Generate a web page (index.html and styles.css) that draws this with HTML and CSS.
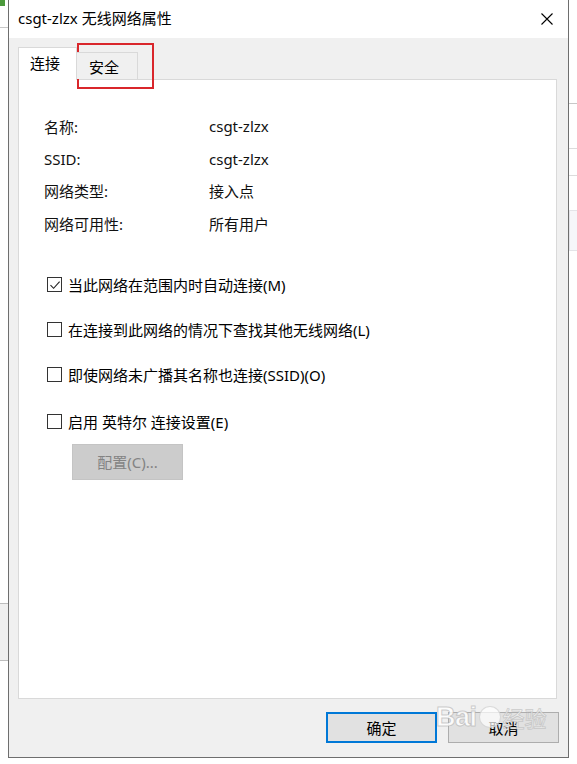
FILE: index.html
```html
<!DOCTYPE html>
<html lang="zh-CN">
<head>
<meta charset="utf-8">
<title>csgt-zlzx 无线网络属性</title>
<link rel="stylesheet" href="styles.css">
</head>
<body>
<div class="backdrop">
  <span class="bg-icon"></span>
  <span class="bg-line bg-line-l1"></span>
  <span class="bg-box bg-box-l"></span>
  <span class="bg-line bg-line-r1"></span>
  <span class="bg-line bg-line-r2"></span>
  <span class="bg-line bg-line-r3"></span>
  <span class="bg-box bg-box-r"></span>
</div>
<div class="dialog">
  <div class="titlebar">
    <span class="title">csgt-zlzx 无线网络属性</span>
    <svg class="close" width="12" height="12" viewBox="0 0 12 12"><path d="M0.5 0.5 L11.5 11.5 M11.5 0.5 L0.5 11.5" stroke="#000" stroke-width="1.1" fill="none"/></svg>
  </div>
  <div class="body">
    <div class="tabs">
      <div class="tab tab-active">连接</div>
      <div class="tab">安全</div>
    </div>
    <div class="panel">
      <div class="info">
        <div class="info-row"><span class="label">名称:</span><span class="value">csgt-zlzx</span></div>
        <div class="info-row"><span class="label">SSID:</span><span class="value">csgt-zlzx</span></div>
        <div class="info-row"><span class="label">网络类型:</span><span class="value">接入点</span></div>
        <div class="info-row"><span class="label">网络可用性:</span><span class="value">所有用户</span></div>
      </div>
      <div class="checks">
        <label class="check check-1"><span class="box"><svg width="12" height="12" viewBox="0 0 12 12"><path d="M1.5 6.2 L4.6 9.3 L10.6 2.6" stroke="#222" stroke-width="1.1" fill="none"/></svg></span>当此网络在范围内时自动连接(M)</label>
        <label class="check check-2"><span class="box"></span>在连接到此网络的情况下查找其他无线网络(L)</label>
        <label class="check check-3"><span class="box"></span>即使网络未广播其名称也连接(SSID)(O)</label>
        <label class="check check-4"><span class="box"></span>启用 英特尔 连接设置(E)</label>
        <div class="config">配置(C)...</div>
      </div>
    </div>
    <div class="footer">
      <div class="btn btn-default">确定</div>
      <div class="btn">取消</div>
    </div>
  </div>
</div>
<div class="annotation"></div>
<div class="watermark"><span class="wm-bai">Bai</span><span class="wm-paw"></span><span class="wm-jy">经验</span></div>
</body>
</html>
```

FILE: styles.css
```css
html, body {
  margin: 0;
  padding: 0;
  background: #ffffff;
  width: 577px;
  height: 764px;
  overflow: hidden;
  font-family: "Noto Sans", "Noto Sans CJK SC", sans-serif;
  font-size: 15px;
  color: #111;
}

.backdrop { position: absolute; left: 0; top: 0; width: 577px; height: 764px; }
.bg-icon { position: absolute; left: 0; top: 0; width: 5px; height: 6px; background: #4c9a3c; }
.bg-line { position: absolute; height: 1px; background: #c8c8c8; }
.bg-line-l1 { left: 0; top: 27px; width: 8px; }
.bg-box { position: absolute; background: #f0f0f0; border: 1px solid #bdbdbd; }
.bg-box-l { left: -1px; top: 603px; width: 8px; height: 56px; }
.bg-line-r1 { left: 569px; top: 103px; width: 8px; }
.bg-line-r2 { left: 569px; top: 148px; width: 8px; background: #dcdcdc; }
.bg-line-r3 { left: 569px; top: 175px; width: 8px; background: #dcdcdc; }
.bg-box-r { left: 569px; top: 210px; width: 9px; height: 39px; background: #f6f6f9; border-color: #e4e4e8; }

.dialog {
  position: relative;
  margin-left: 8px;
  width: 559px;
  height: 757px;
  border-left: 1px solid #6e6e6e;
  border-right: 1px solid #6e6e6e;
  border-bottom: 1px solid #6e6e6e;
  background: #f0f0f0;
  display: flex;
  flex-direction: column;
}

.titlebar {
  height: 38px;
  background: #ffffff;
  display: flex;
  align-items: center;
  justify-content: space-between;
  padding: 0 15px 0 9px;
  flex: none;
}
.title { font-size: 15px; color: #000; line-height: 1; margin-top: -1px; }
.close { display: block; margin-top: -1px; }

.body {
  flex: 1;
  display: flex;
  flex-direction: column;
  padding: 9px 11px 0 9px;
}

.tabs {
  display: flex;
  align-items: flex-end;
  height: 32px;
  position: relative;
  z-index: 1;
}
.tab {
  box-sizing: border-box;
  height: 27px;
  width: 61px;
  border: 1px solid #d9d9d9;
  border-bottom: none;
  border-left: none;
  background: #f0f0f0;
  padding: 5px 0 0 12px;
  font-size: 15px;
  line-height: 18px;
  color: #000;
}
.tab-active {
  width: 59px;
  border-left: 1px solid #d9d9d9;
  border-right: 1px solid #d9d9d9;
  background: #ffffff;
  padding: 6px 0 0 11px;
  margin-bottom: -1px;
  height: 33px;
}

.panel {
  box-sizing: border-box;
  height: 620px;
  background: #ffffff;
  border: 1px solid #d9d9d9;
  padding: 30px 0 0 25px;
  flex: none;
}

.info-row {
  height: 32.4px;
  display: flex;
  align-items: center;
}
.label { width: 165px; }

.checks {
  margin-top: 34px;
  display: flex;
  flex-direction: column;
  padding-left: 3px;
}
.check {
  display: flex;
  align-items: center;
  height: 22px;
  color: #000;
}
.check-2, .check-3 { margin-top: 23px; }
.check-4 { margin-top: 25px; }
.box {
  box-sizing: border-box;
  width: 15px;
  height: 15px;
  border: 1px solid #333;
  background: #fff;
  margin-right: 6px;
  display: flex;
  align-items: center;
  justify-content: center;
  flex: none;
}
.box svg { display: block; }

.config {
  margin: 11px 0 0 25px;
  width: 111px;
  height: 36px;
  box-sizing: border-box;
  background: #cccccc;
  border: 1px solid #c4c4c4;
  color: #838383;
  display: flex;
  align-items: center;
  justify-content: center;
}

.footer {
  display: flex;
  justify-content: flex-end;
  gap: 11px;
  margin-top: 13px;
  margin-right: -2px;
}
.btn {
  box-sizing: border-box;
  width: 111px;
  height: 31px;
  background: #e1e1e1;
  border: 1px solid #adadad;
  display: flex;
  align-items: center;
  justify-content: center;
  color: #000;
  padding-bottom: 1px;
}
.btn-default {
  border: 2px solid #0078d7;
}

.annotation {
  position: absolute;
  left: 77px;
  top: 43px;
  width: 73px;
  height: 42px;
  border: 2px solid #d9262b;
}

.watermark {
  position: absolute;
  left: 436px;
  top: 701px;
  display: flex;
  align-items: center;
  gap: 2px;
  pointer-events: none;
}
.wm-bai {
  font-family: "Liberation Sans", sans-serif;
  font-size: 27px;
  font-weight: bold;
  color: rgba(255,255,255,0.85);
  -webkit-text-stroke: 1px rgba(160,160,160,0.5);
  letter-spacing: -0.5px;
}
.wm-paw {
  width: 20px;
  height: 20px;
  border-radius: 50%;
  background: rgba(255,255,255,0.7);
  border: 1px solid rgba(170,170,170,0.4);
}
.wm-jy {
  font-size: 22px;
  color: rgba(255,255,255,0.75);
  -webkit-text-stroke: 1px rgba(160,160,160,0.45);
}
```
